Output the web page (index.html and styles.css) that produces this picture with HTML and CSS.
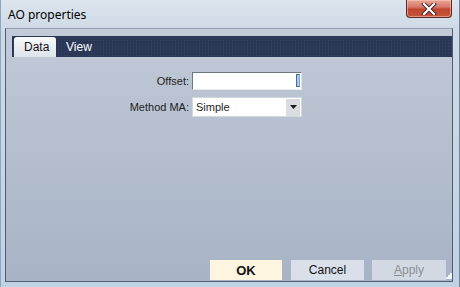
FILE: index.html
```html
<!DOCTYPE html>
<html lang="en">
<head>
  <meta charset="UTF-8">
  <title>AO properties</title>
  <link rel="stylesheet" href="styles.css">
</head>
<body>
  <div class="window">
    <div class="titlebar">
      <span class="title">AO properties</span>
      <button class="close" title="Close">
        <svg width="16" height="12" viewBox="0 0 16 12">
          <path d="M3 1 L13 11 M13 1 L3 11" stroke="#3b2020" stroke-width="4" stroke-linecap="square"/>
          <path d="M3 1 L13 11 M13 1 L3 11" stroke="#ffffff" stroke-width="2.2" stroke-linecap="square"/>
        </svg>
      </button>
    </div>

    <div class="client">
      <div class="tabs">
        <div class="tab active">Data</div>
        <div class="tab">View</div>
      </div>

      <div class="form">
        <label for="offset">Offset:</label>
        <div class="textbox"><input type="text" id="offset"><span class="caret"></span></div>

        <label for="method">Method MA:</label>
        <div class="select" id="method">
          <span>Simple</span>
          <span class="arrow">
            <svg width="7" height="4" viewBox="0 0 7 4"><path d="M0 0 H7 L3.5 4 Z" fill="#1a1a1a"/></svg>
          </span>
        </div>
      </div>

      <div class="buttons">
        <button class="btn ok">OK</button>
        <button class="btn cancel">Cancel</button>
        <button class="btn disabled"><u>A</u>pply</button>
        <svg class="grip" width="6" height="6" viewBox="0 0 6 6">
          <rect x="4" y="0" width="2" height="2" fill="#f2f5f9"/>
          <rect x="2" y="2" width="2" height="2" fill="#f2f5f9"/>
          <rect x="4" y="2" width="2" height="2" fill="#f2f5f9"/>
          <rect x="0" y="4" width="2" height="2" fill="#f2f5f9"/>
          <rect x="2" y="4" width="2" height="2" fill="#f2f5f9"/>
          <rect x="4" y="4" width="2" height="2" fill="#f2f5f9"/>
        </svg>
      </div>
    </div>
  </div>
</body>
</html>
```

FILE: styles.css
```css
* {
  box-sizing: border-box;
}
body {
  margin: 0;
  font-family: "Liberation Sans", Arial, sans-serif;
  background: #c6d6e6;
}
.window {
  width: 460px;
  height: 287px;
  display: flex;
  flex-direction: column;
  background: linear-gradient(to bottom, #dde5ee 0px, #cfdae6 28px, #bfd2e6 100%);
  border-left: 1px solid #8fa6bd;
  border-right: 1px solid #6f8296;
  overflow: hidden;
}
.titlebar {
  height: 28px;
  display: flex;
  align-items: flex-start;
}
.title {
  margin: 6px 0 0 7px;
  font-family: "Noto Sans", "Open Sans", sans-serif;
  font-size: 12px;
  color: #000;
}
.close {
  margin-left: auto;
  margin-right: 7px;
  width: 46px;
  height: 18px;
  padding: 0;
  border: 1px solid #5b2a24;
  border-top: none;
  border-radius: 0 0 4px 4px;
  background: linear-gradient(to bottom, #e9a597 0%, #d77b6b 40%, #c2452f 55%, #c5563c 100%);
  box-shadow: inset 0 0 0 1px rgba(255, 210, 200, 0.5);
  display: flex;
  align-items: center;
  justify-content: center;
}
.client {
  margin: 0 6px 0 4px;
  height: 254px;
  border: 1px solid #4f5d70;
  border-top-color: #93a0b2;
  background: linear-gradient(to bottom, #c3cbd8 0%, #b8c2d1 30%, #a8b3c6 100%);
  display: flex;
  flex-direction: column;
  padding-top: 7px;
}
.tabs {
  height: 21px;
  margin-left: 6px;
  padding-left: 2px;
  display: flex;
  align-items: flex-end;
  background-color: #2a3855;
  background-image: radial-gradient(#34456a 0.8px, transparent 1px);
  background-size: 3px 3px;
}
.tab {
  height: 20px;
  padding: 3px 0 0 10px;
  width: 42px;
  font-size: 12px;
  color: #fff;
}
.tab.active {
  color: #111;
  border-radius: 3px 3px 0 0;
  background: linear-gradient(to bottom, #fafbfc 0%, #e9edf2 50%, #dfe4eb 100%);
}
.form {
  display: grid;
  grid-template-columns: 183px 110px;
  column-gap: 3px;
  row-gap: 7px;
  align-items: center;
  margin-top: 15px;
  font-size: 11px;
  color: #1e1e1e;
}
.form label {
  text-align: right;
}
.textbox {
  position: relative;
  height: 18px;
  background: #fff;
  border: 1px solid #6e7682;
  border-right-color: #dfe3e8;
  border-bottom-color: #e6e9ee;
}
.textbox input {
  width: 100%;
  height: 100%;
  border: none;
  outline: none;
  padding: 0 3px;
  background: transparent;
}
.caret {
  position: absolute;
  right: 1px;
  top: 1px;
  width: 4px;
  height: 13px;
  background: #a9cbeb;
  border: 1px solid #3d6e9e;
  border-right-color: #7fa8d0;
}
.select {
  height: 20px;
  background: #fff;
  border: 1px solid #d3d8df;
  display: flex;
  align-items: center;
  padding-left: 3px;
  font-size: 11px;
}
.select .arrow {
  margin-left: auto;
  width: 14px;
  height: 17px;
  margin-right: 1px;
  background: #d9dce1;
  display: flex;
  align-items: center;
  justify-content: center;
}
.buttons {
  margin-top: auto;
  margin-bottom: 1px;
  display: flex;
  align-items: flex-end;
  justify-content: flex-end;
}
.btn {
  width: 73px;
  height: 20px;
  padding: 0;
  border: none;
  font-family: "Liberation Sans", Arial, sans-serif;
  font-size: 12px;
  color: #111;
  background: #d9e0e9;
}
.btn.ok {
  width: 72px;
  margin-right: 9px;
  font-weight: bold;
  font-size: 13px;
  background: #fdf5e0;
}
.btn.cancel {
  margin-right: 8px;
}
.btn.disabled {
  width: 74px;
  color: #8b8f96;
  background: #d3d9e2;
}
.grip {
  margin-bottom: 1px;
}
```
